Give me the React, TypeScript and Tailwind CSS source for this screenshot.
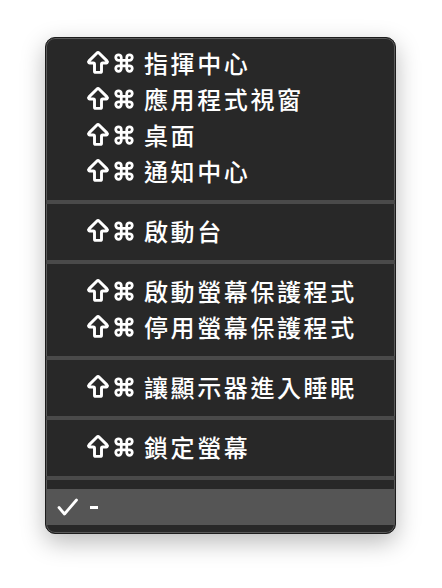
import { ArrowBigUp, Command } from "lucide-react";

type Item = { label: string };

const groups: Item[][] = [
  [{ label: "指揮中心" }, { label: "應用程式視窗" }, { label: "桌面" }, { label: "通知中心" }],
  [{ label: "啟動台" }],
  [{ label: "啟動螢幕保護程式" }, { label: "停用螢幕保護程式" }],
  [{ label: "讓顯示器進入睡眠" }],
  [{ label: "鎖定螢幕" }],
];

function Separator() {
  return (
    <div className="pt-[11px] pb-[9px]">
      <div className="h-[4px] bg-[#4a4a4a]" />
    </div>
  );
}

function MenuRow({ label }: Item) {
  return (
    <div className="flex h-[36px] items-center pl-[38px]">
      <ArrowBigUp size={28} strokeWidth={2.5} className="shrink-0 text-white" />
      <Command size={22} strokeWidth={3} className="ml-[1px] shrink-0 text-white" />
      <span className="ml-[9px] text-[24px] font-medium leading-none tracking-[2.6px] text-white">
        {label}
      </span>
    </div>
  );
}

export default function App() {
  return (
    <div
      className="min-h-[588px] w-[442px] bg-white pt-[37px] pl-[45px]"
      style={{ fontFamily: '"Noto Sans CJK TC", "Noto Sans", sans-serif' }}
    >
      <div className="w-[351px] overflow-hidden rounded-[10px] border border-[#1c1c1c] bg-[#282828] pt-[7px] pb-[8px] shadow-[inset_0_0_0_1px_#5a5a5a,0_8px_24px_rgba(0,0,0,0.28)]">
        {groups.map((group, gi) => (
          <div key={gi}>
            {group.map((item) => (
              <MenuRow key={item.label} label={item.label} />
            ))}
            <Separator />
          </div>
        ))}
        <div className="flex h-[36px] items-center bg-[#555555] pl-[11px]">
          <svg width="22" height="18" viewBox="0 0 22 18" className="shrink-0">
            <polyline
              points="2,9.5 7.5,16 19.5,2"
              fill="none"
              stroke="white"
              strokeWidth="2.8"
              strokeLinecap="round"
              strokeLinejoin="round"
            />
          </svg>
          <span className="ml-[11px] h-[3px] w-[8px] bg-white" />
        </div>
      </div>
    </div>
  );
}
